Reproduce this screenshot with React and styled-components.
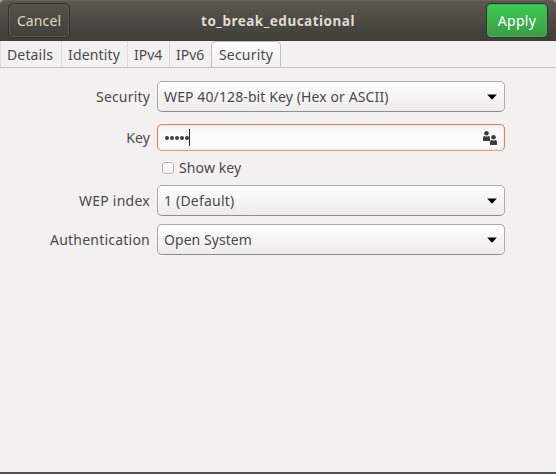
import React from "react";
import styled, { createGlobalStyle } from "styled-components";

const GlobalStyle = createGlobalStyle`
  * { box-sizing: border-box; }
  body { margin: 0; background: #f2f1ef; }
`;

const Window = styled.div`
  width: 556px;
  height: 474px;
  display: flex;
  flex-direction: column;
  background: #f2f1ef;
  border-bottom: 2px solid #555351;
  color: #4a4a4a;
  font: 14px/20px "Noto Sans", sans-serif;
  overflow: hidden;
`;

const Backdrop = styled.div`
  flex: none;
  background: #a09e9b;
`;

const HeaderBar = styled.header`
  height: 41px;
  padding: 3px 8px 0;
  display: flex;
  justify-content: space-between;
  align-items: flex-start;
  border-radius: 5px 5px 0 0;
  background: linear-gradient(#5c584f, #3f3d39);
  box-shadow: inset 0 1px #68645c;
`;

const Text = styled.span`
  letter-spacing: ${(p) => p.$spacing || 0}px;
  white-space: nowrap;
`;

const HeaderButton = styled.button`
  width: 62px;
  height: 35px;
  padding: 1px 0 0;
  font: inherit;
  color: ${(p) => (p.$suggested ? "#fff" : "#dfd8c8")};
  border: 1px solid #33322e;
  border-radius: 5px;
  background: ${(p) =>
    p.$suggested
      ? "linear-gradient(#3ccb50, #3a9c47)"
      : "linear-gradient(#55524a, #42403b)"};
  box-shadow: inset 0 0 0 1px ${(p) => (p.$suggested ? "#3db64e" : "#5b5850")};
`;

const Title = styled.h1`
  margin: 8px 0 0;
  font: bold 13.5px/20px "Noto Sans", sans-serif;
  color: #dfdbd2;
`;

const TabBar = styled.nav`
  flex: none;
  height: 27px;
  display: flex;
  border-bottom: 1px solid #c3c2bf;
`;

const Tab = styled.div`
  width: ${(p) => p.$width}px;
  height: ${(p) => (p.$active ? 27 : 26)}px;
  padding: ${(p) => (p.$active ? 3 : 4)}px 0 0 ${(p) => (p.$active ? 7 : 6)}px;
  border: ${(p) => (p.$active ? "1px solid #bfbebb" : "0 solid #dddcda")};
  border-left-width: 1px;
  border-bottom: ${(p) => (p.$active ? "1px solid #c3c2bf" : "0")};
  border-radius: ${(p) => (p.$active ? "5px 5px 0 0" : 0)};
  background: ${(p) => (p.$active ? "linear-gradient(#fdfdfd, #f2f1ef)" : "none")};
`;

const Label = styled.label`
  text-align: right;
`;

const Control = styled.div`
  display: flex;
  align-items: center;
  justify-content: space-between;
  height: ${(p) => (p.$entry ? 27 : 31)}px;
  padding: 0 7px 0 6px;
  border: 1px solid ${(p) => (p.$entry ? "#e0835f" : "#acaba9")};
  border-bottom-color: ${(p) => (p.$entry ? "#e99c7e" : "#8f8e8c")};
  border-radius: 5px;
  background: ${(p) =>
    p.$entry ? "linear-gradient(#f7f7f7, #fff)" : "linear-gradient(#fefefe, #edecea)"};
  box-shadow: ${(p) => (p.$entry ? "inset 0 0 0 1px #fbe6de" : "inset 0 1px #fff")};
`;

const Form = styled.form`
  padding: 13px 0 0;
`;

const Row = styled.div`
  display: grid;
  grid-template-columns: 150px 348px;
  column-gap: 7px;
  align-items: center;
  margin-bottom: ${(p) => p.$gap}px;
`;

const Password = styled.div`
  display: flex;
  align-items: center;
  gap: 1px;
  padding-left: 1px;
`;

const Dot = styled.i`
  width: 4px;
  height: 4px;
  border-radius: 50%;
  background: #3c3c3c;
`;

const Caret = styled.i`
  width: 1px;
  height: 17px;
  margin-left: -1px;
  background: #222;
`;

const CheckRow = styled.label`
  display: flex;
  align-items: center;
  height: 20px;
  margin: 7px 0 7px 162px;
`;

const CheckBox = styled.i`
  width: 12px;
  height: 12px;
  margin-right: 5px;
  border: 1px solid #b7b5b2;
  border-radius: 3px;
  background: linear-gradient(#fff, #f3f3f2);
`;

const Arrow = () => (
  <svg width="10" height="6" viewBox="0 0 10 6">
    <path d="M.2.5h9.6L5.8 5q-.8.7-1.6 0z" fill="#000" />
  </svg>
);

const Users = () => (
  <svg width="14" height="14" viewBox="0 0 14 14" fill="#3c3c3c">
    <circle cx="3.5" cy="2.3" r="2.3" />
    <path d="M0 10V7q0-2 1.6-2Q3.5 6.2 5.4 5 7 5 7 7v3z" />
    <circle cx="10.5" cy="6.3" r="2.3" />
    <path d="M7 14v-3q0-2 1.6-2 1.9 1.2 3.8 0Q14 9 14 11v3z" />
  </svg>
);

const tabs = [
  { name: "Details", width: 61, spacing: 0.15 },
  { name: "Identity", width: 66, spacing: 0.15 },
  { name: "IPv4", width: 42, spacing: 0 },
  { name: "IPv6", width: 42, spacing: 0 },
  { name: "Security", width: 70, spacing: 0.18, active: true },
];

const Select = ({ label, labelSpacing, value, spacing, gap }) => (
  <Row $gap={gap}>
    <Label><Text $spacing={labelSpacing}>{label}</Text></Label>
    <Control><Text $spacing={spacing}>{value}</Text><Arrow /></Control>
  </Row>
);

export default function App() {
  return (
    <>
      <GlobalStyle />
      <Window>
        <Backdrop>
          <HeaderBar>
            <HeaderButton><Text $spacing={0.1}>Cancel</Text></HeaderButton>
            <Title><Text $spacing={0.5}>to_break_educational</Text></Title>
            <HeaderButton $suggested><Text $spacing={0.3}>Apply</Text></HeaderButton>
          </HeaderBar>
        </Backdrop>
        <TabBar>
          {tabs.map((t) => (
            <Tab key={t.name} $width={t.width} $active={t.active}>
              <Text $spacing={t.spacing}>{t.name}</Text>
            </Tab>
          ))}
        </TabBar>
        <Form>
          <Select
            label="Security"
            labelSpacing={0.18}
            value="WEP 40/128-bit Key (Hex or ASCII)"
            spacing={0.11}
            gap={12}
          />
          <Row $gap={0}>
            <Label><Text $spacing={0.1}>Key</Text></Label>
            <Control $entry>
              <Password><Dot /><Dot /><Dot /><Dot /><Dot /><Caret /></Password>
              <Users />
            </Control>
          </Row>
          <CheckRow><CheckBox /><Text $spacing={0.12}>Show key</Text></CheckRow>
          <Select label="WEP index" labelSpacing={0.25} value="1 (Default)" spacing={0.2} gap={8} />
          <Select label="Authentication" labelSpacing={0.22} value="Open System" spacing={0.06} gap={0} />
        </Form>
      </Window>
    </>
  );
}
